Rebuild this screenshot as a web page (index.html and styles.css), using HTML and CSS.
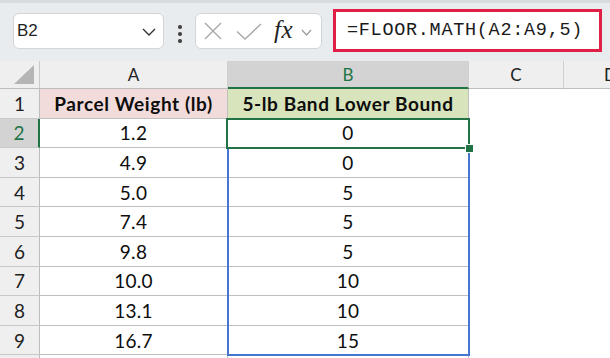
FILE: index.html
```html
<!DOCTYPE html>
<html>
<head>
<meta charset="utf-8">
<link rel="stylesheet" href="styles.css">
</head>
<body>
<div class="app">
  <div class="topline"></div>
  <div class="toolbar">
    <div class="namebox">
      <span class="name">B2</span>
      <svg class="chev" width="14" height="8" viewBox="0 0 14 8"><polyline points="1,1 7,7 13,1" fill="none" stroke="#333" stroke-width="1.4"/></svg>
    </div>
    <div class="dots"><i></i><i></i><i></i></div>
    <div class="fxbox">
      <svg class="ic-x" width="18" height="18" viewBox="0 0 18 18"><path d="M1 1 L17 17 M17 1 L1 17" stroke="#a8a8a8" stroke-width="1.4" fill="none"/></svg>
      <svg class="ic-check" width="26" height="17" viewBox="0 0 26 17"><polyline points="1,8.5 9,16 25,1" fill="none" stroke="#a8a8a8" stroke-width="1.4"/></svg>
      <span class="fx">fx</span>
      <svg class="chev2" width="11" height="7" viewBox="0 0 11 7"><polyline points="1,1 5.5,6 10,1" fill="none" stroke="#9a9a9a" stroke-width="1.2"/></svg>
    </div>
    <div class="formula">=FLOOR.MATH(A2:A9,5)</div>
  </div>
  <div class="sheet-wrap">
    <div class="sheet gridt">
      <div class="corner"><svg width="20" height="19" viewBox="0 0 20 19"><polygon points="20,0 20,19 0,19" fill="#b5b5b5"/></svg></div>
      <div class="ch">A</div>
      <div class="ch sel">B</div>
      <div class="ch">C</div>
      <div class="ch last">D</div>

      <div class="rn">1</div><div class="c head pink">Parcel Weight (lb)</div><div class="c head green">5-lb Band Lower Bound</div><div class="blank"></div><div class="blank"></div>
      <div class="rn sel">2</div><div class="c">1.2</div><div class="c">0</div><div class="blank"></div><div class="blank"></div>
      <div class="rn">3</div><div class="c">4.9</div><div class="c">0</div><div class="blank"></div><div class="blank"></div>
      <div class="rn">4</div><div class="c">5.0</div><div class="c">5</div><div class="blank"></div><div class="blank"></div>
      <div class="rn">5</div><div class="c">7.4</div><div class="c">5</div><div class="blank"></div><div class="blank"></div>
      <div class="rn">6</div><div class="c">9.8</div><div class="c">5</div><div class="blank"></div><div class="blank"></div>
      <div class="rn">7</div><div class="c">10.0</div><div class="c">10</div><div class="blank"></div><div class="blank"></div>
      <div class="rn">8</div><div class="c">13.1</div><div class="c">10</div><div class="blank"></div><div class="blank"></div>
      <div class="rn">9</div><div class="c">16.7</div><div class="c">15</div><div class="blank"></div><div class="blank"></div>
      <div class="rn"></div><div class="c"></div><div class="c"></div><div class="blank"></div><div class="blank"></div>
    </div>
    <div class="overlay gridt">
      <div class="range"></div>
      <div class="active"><span class="handle"></span></div>
    </div>
  </div>
</div>
</body>
</html>
```
FILE: styles.css
```css
* { box-sizing: border-box; }
html, body { margin: 0; padding: 0; }
body { width: 610px; height: 358px; overflow: hidden; background: #fff; font-family: Lato, "Noto Sans", sans-serif; color: #1f1f1f; }

.app { width: 610px; height: 358px; overflow: hidden; }
.topline { height: 3px; background: #d8dbde; }
.toolbar { height: 58px; background: #e9ecef; display: flex; align-items: flex-start; padding-left: 13px; }

.namebox { margin-top: 10px; width: 151px; height: 36px; background: #fff; border: 1px solid #d3d6d9; border-radius: 6px; display: flex; align-items: center; justify-content: space-between; padding: 0 7px 0 3px; }
.name { font-family: "Liberation Sans", Arial, sans-serif; font-size: 17px; color: #1f1f1f; }
.chev { margin-top: 2px; }

.dots { margin: 22px 0 0 14px; width: 4px; display: flex; flex-direction: column; gap: 3.5px; }
.dots i { display: block; width: 3.5px; height: 3.5px; border-radius: 50%; background: #454545; }

.fxbox { margin: 10px 0 0 13px; width: 127px; height: 36px; background: #fff; border: 1px solid #d3d6d9; border-radius: 6px; display: flex; align-items: center; padding-left: 8px; }
.ic-x { flex: none; }
.ic-check { flex: none; margin-left: 14px; }
.fx { margin-left: 12px; font-family: "Liberation Serif", "Times New Roman", serif; font-style: italic; font-size: 25px; letter-spacing: 0.5px; color: #222; line-height: 1; margin-top: -3px; }
.chev2 { margin-left: 8px; margin-top: 2px; }

.formula { margin: 6px 0 0 11px; width: 269px; height: 43px; background: #fff; border: 3px solid #e01f47; display: flex; align-items: center; padding-left: 11px; font-family: "Liberation Mono", "DejaVu Sans Mono", monospace; font-size: 18.5px; letter-spacing: 0.7px; color: #1a1a1a; }

.sheet-wrap { position: relative; }
.gridt { display: grid; grid-template-columns: 40px 188px 241px 95px 46px; grid-template-rows: 28px repeat(9, 29.6px) 20px; }
.overlay { position: absolute; inset: 0; pointer-events: none; }

.corner { background: #efefef; border-right: 1px solid #c9c9c9; border-bottom: 1px solid #bdbdbd; display: flex; align-items: flex-end; justify-content: flex-end; padding: 0 5px 4px 0; }
.ch { background: #efefef; border-right: 1px solid #d0d0d0; border-bottom: 1px solid #bdbdbd; display: flex; align-items: center; justify-content: center; font-size: 17px; color: #222; }
.ch.last { justify-content: flex-start; padding-left: 40px; border-right: none; }
.ch.sel { background: #d3d3d3; color: #217346; border-bottom: 2px solid #217346; }

.rn { background: #efefef; border-right: 1px solid #bdbdbd; border-bottom: 1px solid #c8c8c8; display: flex; align-items: center; justify-content: center; font-size: 19px; color: #222; }
.rn.sel { background: #d3d3d3; color: #217346; border-right: 2px solid #217346; }

.c { border-right: 1px solid #bfbfbf; border-bottom: 1px solid #bfbfbf; display: flex; align-items: center; justify-content: center; font-size: 19px; letter-spacing: 0.3px; color: #0d0d0d; }
.c.head { font-weight: 700; letter-spacing: 0.6px; }
.c.pink { background: #f2dcdb; }
.c.green { background: #d8e4bc; }
.blank { background: #fff; }

.range { grid-column: 3; grid-row: 4 / 11; margin: 0 -1px -1px -1px; border: 2px solid #4476cf; border-top: none; }
.active { grid-column: 3; grid-row: 3; margin: -1px -1px -1px -2px; border: 2.5px solid #217346; position: relative; }
.handle { position: absolute; right: -6px; bottom: -6px; width: 9px; height: 9px; background: #217346; border: 1px solid #fff; }
```
